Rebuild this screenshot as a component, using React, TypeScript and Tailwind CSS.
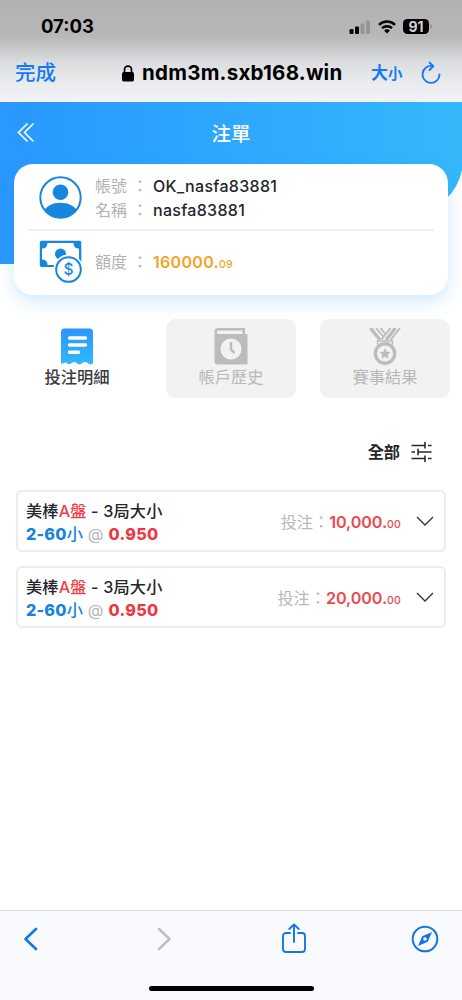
import type { ReactNode } from "react";

type Bet = {
  id: number;
  league: string;
  market: string;
  pick: string;
  odds: string;
  amount: string;
};

const BETS: Bet[] = [
  { id: 1, league: "美棒", market: "3局大小", pick: "2-60", odds: "0.950", amount: "10,000." },
  { id: 2, league: "美棒", market: "3局大小", pick: "2-60", odds: "0.950", amount: "20,000." },
];

export default function App() {
  return (
    <div className="flex h-[1000px] w-[462px] flex-col overflow-hidden bg-white font-['Inter','Noto_Sans_CJK_TC',sans-serif] text-[#24262b]">
      <BrowserTop />
      <main className="flex-1">
        <Account />
        <Tabs />
        <div className="mt-[38px] flex h-8 items-center justify-end gap-[11px] pr-[30px]">
          <span className="text-[16.2px] font-bold">全部</span>
          <FilterIcon />
        </div>
        <div className="mt-[22px] flex flex-col gap-[14px] px-4">
          {BETS.map((bet) => (
            <BetRow key={bet.id} bet={bet} />
          ))}
        </div>
      </main>
      <BrowserToolbar />
    </div>
  );
}

function BrowserTop() {
  return (
    <div className="h-[102px] shrink-0 bg-[linear-gradient(180deg,#b1b1b1_0%,#b8b8b8_36%,#cacacb_48%,#dcdee1_62%,#e9eaec_80%,#f4f3f8_100%)] text-black">
      <div className="flex h-[53px] items-center justify-between pr-[30px] pl-[41px]">
        <span className="text-[18.5px] font-bold">07:03</span>
        <div className="flex items-center gap-[7px]">
          <svg width="22" height="14" viewBox="0 0 22 14">
            <rect x="0.5" y="9" width="4" height="5" rx="1.2" />
            <rect x="6" y="6.5" width="4" height="7.5" rx="1.2" />
            <rect x="11.5" y="3.5" width="4" height="10.5" rx="1.2" fill="#969696" />
            <rect x="17" y="0.5" width="4" height="13.5" rx="1.2" fill="#969696" />
          </svg>
          <svg width="18" height="14" viewBox="0 0 18 14" fill="none" stroke="black" strokeWidth="2.4">
            <path d="M1 4.8a11.4 11.4 0 0 1 16 0" />
            <path d="M4 8.2a7.2 7.2 0 0 1 10 0" />
            <path d="M9 13.6l-2.9-3a4.1 4.1 0 0 1 5.8 0z" fill="black" stroke="none" />
          </svg>
          <div className="flex items-center gap-px">
            <span className="flex h-[15px] w-[26px] items-center justify-center rounded-[4.5px] bg-black text-[14px] leading-[15px] font-bold text-[#d0d0d0]">
              91
            </span>
            <span className="h-[5px] w-[2px] rounded-r-full bg-[#969696]" />
          </div>
        </div>
      </div>
      <div className="flex h-[40px] items-center pr-[21px] pl-[15px] text-[#147af5]">
        <span className="w-[107px] pt-px text-[20.5px] font-medium">完成</span>
        <svg width="12" height="17" viewBox="0 0 12 17" className="mr-[8px]">
          <rect x="0" y="7" width="12" height="9.5" rx="1.8" fill="black" />
          <path d="M2.5 8V4.6a3.5 3.5 0 0 1 7 0V8" fill="none" stroke="black" strokeWidth="1.7" />
        </svg>
        <span className="w-[229px] text-[20.5px] font-bold tracking-[0.25px] whitespace-nowrap text-black">ndm3m.sxb168.win</span>
        <span className="flex w-[50px] items-baseline pt-px font-bold">
          <span className="text-[17px]">大</span>
          <span className="text-[14.5px]">小</span>
        </span>
        <svg width="20" height="24" viewBox="0 0 20 24" fill="none" stroke="currentColor" strokeWidth="1.9" strokeLinecap="round" strokeLinejoin="round">
          <path d="M11.6 5A8.5 8.5 0 1 0 18.5 13.4" />
          <path d="M8.6 1.6l3.8 3.6-3.8 3.8" />
        </svg>
      </div>
    </div>
  );
}

function Account() {
  return (
    <section className="grid">
      <div className="col-start-1 row-start-1 h-[162px] bg-linear-to-r from-[#2997ff] to-[#34b8fb] [clip-path:path('M0_0H462V68Q458_86_446_97L400_115L200_162H0Z')]" />
      <div className="z-10 col-start-1 row-start-1">
        <header className="grid h-[62px] grid-cols-3 items-center px-[17px] text-white">
          <svg width="18" height="20" viewBox="0 0 18 20" fill="none" stroke="currentColor" strokeWidth="1.6">
            <path d="M10.5 0.5L1.5 9.5l9 9M16.5 0.5l-9 9 9 9" />
          </svg>
          <h1 className="pt-[3px] text-center text-[19.5px] font-medium">注單</h1>
        </header>
        <div className="mx-[14px] h-[131px] rounded-[19px] bg-white px-[14px] shadow-[0_6px_18px_rgba(41,151,255,0.22)]">
          <div className="flex h-[67px] items-center border-b-2 border-[#f0f0f1] pt-[2px] pl-[11px]">
            <UserIcon />
            <div className="ml-[13px] flex flex-col pt-px text-[16px] leading-6">
              <Field label="帳號">OK_nasfa83881</Field>
              <Field label="名稱">nasfa83881</Field>
            </div>
          </div>
          <div className="flex h-[60px] items-center pl-[11px]">
            <MoneyIcon />
            <div className="ml-[13px] pt-[4px] text-[16px] leading-6">
              <Field label="額度">
                <span className="font-semibold text-[#f2a323]">
                  160000.<span className="text-[10.5px] font-medium">09</span>
                </span>
              </Field>
            </div>
          </div>
        </div>
      </div>
    </section>
  );
}

function Field({ label, children }: { label: string; children: ReactNode }) {
  return (
    <div className="flex items-baseline">
      <span className="w-[37px] text-[#b2b2b2]">{label}</span>
      <span className="w-[21px] text-[#b2b2b2]">：</span>
      <span className="font-medium tracking-[0.3px]">{children}</span>
    </div>
  );
}

function Tabs() {
  return (
    <nav className="mt-6 grid grid-cols-3 gap-6 px-3 text-[16.3px]">
      <button className="flex h-[79px] flex-col items-center pt-[9px] text-[#3a3b3f]">
        <TicketIcon />
        <span className="leading-6 font-medium">投注明細</span>
      </button>
      <button className="flex h-[79px] flex-col items-center rounded-[9px] bg-[#f2f2f2] pt-[9px] text-[#b8b8b8]">
        <HistoryIcon />
        <span className="leading-6">帳戶歷史</span>
      </button>
      <button className="flex h-[79px] flex-col items-center rounded-[9px] bg-[#f2f2f2] pt-[9px] text-[#b8b8b8]">
        <MedalIcon />
        <span className="leading-6">賽事結果</span>
      </button>
    </nav>
  );
}

function BetRow({ bet }: { bet: Bet }) {
  return (
    <div className="flex h-[62px] items-center justify-between rounded-[6px] border-2 border-[#ececec] pr-[10px] pl-2 text-[16.2px]">
      <div className="pt-[3px] leading-[23px]">
        <p className="font-medium tracking-[0.15px]">
          {bet.league}
          <span className="text-[#f04149]">A盤</span> - {bet.market}
        </p>
        <p className="font-extrabold tracking-[0.2px] text-[#1684dd]">
          {bet.pick}
          <span className="font-medium">小</span>
          <span className="font-normal text-[#b8b8b8]"> @ </span>
          <span className="tracking-[0.3px] text-[#ee3742]">{bet.odds}</span>
        </p>
      </div>
      <div className="flex items-center">
        <div className="flex items-baseline pt-[3px]">
          <span className="text-[#b8b8b8]">投注：</span>
          <span className="font-semibold tracking-[-0.1px] text-[#ee4850]">{bet.amount}</span>
          <span className="text-[10.5px] font-medium tracking-[0.2px] text-[#ee4850]">00</span>
        </div>
        <svg className="ml-[15px]" width="18" height="10" viewBox="0 0 18 10" fill="none" stroke="#333" strokeWidth="1.3">
          <path d="M1 1l8 8 8-8" />
        </svg>
      </div>
    </div>
  );
}

function BrowserToolbar() {
  return (
    <footer className="flex h-[90px] shrink-0 flex-col items-center border-t border-[#dedede] bg-[#f9fafd]">
      <div className="flex h-[55px] w-full items-center pl-[23px] text-[#1575e8]">
        <svg width="15" height="24" viewBox="0 0 15 24" fill="none" stroke="currentColor" strokeWidth="2.6" strokeLinecap="round" strokeLinejoin="round">
          <path d="M13 2L2.5 12 13 22" />
        </svg>
        <svg className="ml-[119px]" width="15" height="24" viewBox="0 0 15 24" fill="none" stroke="#bfc0c2" strokeWidth="2.6" strokeLinecap="round" strokeLinejoin="round">
          <path d="M2 2l10.5 10L2 22" />
        </svg>
        <svg className="mb-px ml-[109px]" width="26" height="32" viewBox="0 0 26 32" fill="none" stroke="currentColor" strokeWidth="1.9" strokeLinecap="round" strokeLinejoin="round">
          <path d="M9 11H5a3 3 0 0 0-3 3v13a3 3 0 0 0 3 3h16a3 3 0 0 0 3-3V14a3 3 0 0 0-3-3h-4M13 20V2.5M8.3 7L13 2.3 17.7 7" />
        </svg>
        <svg className="ml-[104px]" width="28" height="28" viewBox="0 0 28 28">
          <circle cx="14" cy="14" r="12.3" fill="none" stroke="currentColor" strokeWidth="2" />
          <path fillRule="evenodd" fill="currentColor" d="M21 7L16.8 16.8 7 21l4.2-9.8zM14 12.2a1.8 1.8 0 1 0 0 3.6 1.8 1.8 0 0 0 0-3.6z" />
        </svg>
      </div>
      <div className="mt-[20px] h-[5px] w-[165px] rounded-full bg-black" />
    </footer>
  );
}

function UserIcon() {
  return (
    <svg width="43" height="43" viewBox="0 0 43 43" fill="#1686de">
      <circle cx="21.5" cy="21.5" r="20.2" fill="none" stroke="#1686de" strokeWidth="2" />
      <circle cx="21.5" cy="16.3" r="7.8" />
      <path d="M5 34.3C9 29.500 14 26.800 21.500 26.800S34 29.500 38 34.300C34 39.500 28 42 21.500 42S9 39.500 5 34.300z" />
    </svg>
  );
}

function MoneyIcon() {
  return (
    <svg width="43" height="43" viewBox="0 0 43 43">
      <rect x="0.8" y="0.8" width="41.500" height="26.200" rx="1.8" fill="#1686de" />
      <path d="M8.5 3H34.5Q34.500 8.500 40 8.500V25H8.500Q8.500 19.500 3 19.500V8.500Q8.500 8.500 8.500 3z" fill="white" />
      <circle cx="21.5" cy="14" r="5.5" fill="#1686de" />
      <circle cx="29.5" cy="29.5" r="15" fill="white" />
      <circle cx="29.5" cy="29.5" r="12.3" fill="white" stroke="#1686de" strokeWidth="2" />
      <text x="29.5" y="34.9" textAnchor="middle" fontSize="15.500" fontWeight="500" fill="#1686de">
        $
      </text>
    </svg>
  );
}

function TicketIcon() {
  return (
    <svg width="34" height="37" viewBox="0 0 34 37">
      <defs>
        <linearGradient id="ticket" x1="0" y1="0" x2="0" y2="1">
          <stop offset="0" stopColor="#2b96fb" />
          <stop offset="1" stopColor="#31b9fa" />
        </linearGradient>
      </defs>
      <path d="M4.500 0.500h25a3.500 3.500 0 0 1 3.500 3.500v31.500c-2 1.600-4 1-5.500-.5s-4-1.500-5.200 0-3.300 2-5.300.2-3.800-1.600-5.200-.2-3.800 1.600-5.300 0S3 36.500 1 35.500V4a3.500 3.500 0 0 1 3.500-3.500z" fill="url(#ticket)" />
      <path d="M9.5 10h16M9.5 17h16M9.5 24.2h9" stroke="white" strokeWidth="3.4" strokeLinecap="round" />
    </svg>
  );
}

function HistoryIcon() {
  return (
    <svg width="34" height="37" viewBox="0 0 34 37">
      <path d="M4 0h27v6h2.5v30.500H3.500A3 3 0 0 1 0.500 33.500V3.500A3.500 3.500 0 0 1 4 0z" fill="#bcbcbc" />
      <path d="M28.5 2.500H4.500a1.700 1.700 0 0 0 0 3.500h24z" fill="#f2f2f2" />
      <circle cx="17" cy="21" r="10.5" fill="#f2f2f2" />
      <path d="M17 14v7.500l3.500 3.500" fill="none" stroke="#bcbcbc" strokeWidth="2.5" />
    </svg>
  );
}

function MedalIcon() {
  return (
    <svg width="34" height="37" viewBox="0 0 34 37" fill="none" stroke="#bcbcbc">
      <path d="M2.5 0L12 12M27.500 0L18 12" strokeWidth="3.4" />
      <path d="M8 0L15.500 9M12.500 0L17 5.500M22.500 0L13.500 11.500M32 0L22.500 12" strokeWidth="1.8" />
      <path d="M9.500 16.500v-3.500h15v3.500" strokeWidth="1.500" />
      <circle cx="17" cy="25.500" r="9.700" strokeWidth="3.400" />
      <path d="M17 20l1.600 3.700 4 .4-3 2.700.9 4-3.500-2.100-3.500 2.100.9-4-3-2.700 4-.4z" fill="#bcbcbc" stroke="none" />
    </svg>
  );
}

function FilterIcon() {
  return (
    <svg width="21" height="20" viewBox="0 0 21 20" fill="none" stroke="#26282c" strokeWidth="1.6">
      <path d="M0.500 3.500H14M17 3.500h3.500M0.500 10H4M7 10h13.500M0.500 16.500H14M17 16.500h3.500M14 0v6.500M7 6.700v6.600M14 13.500V20" />
    </svg>
  );
}
